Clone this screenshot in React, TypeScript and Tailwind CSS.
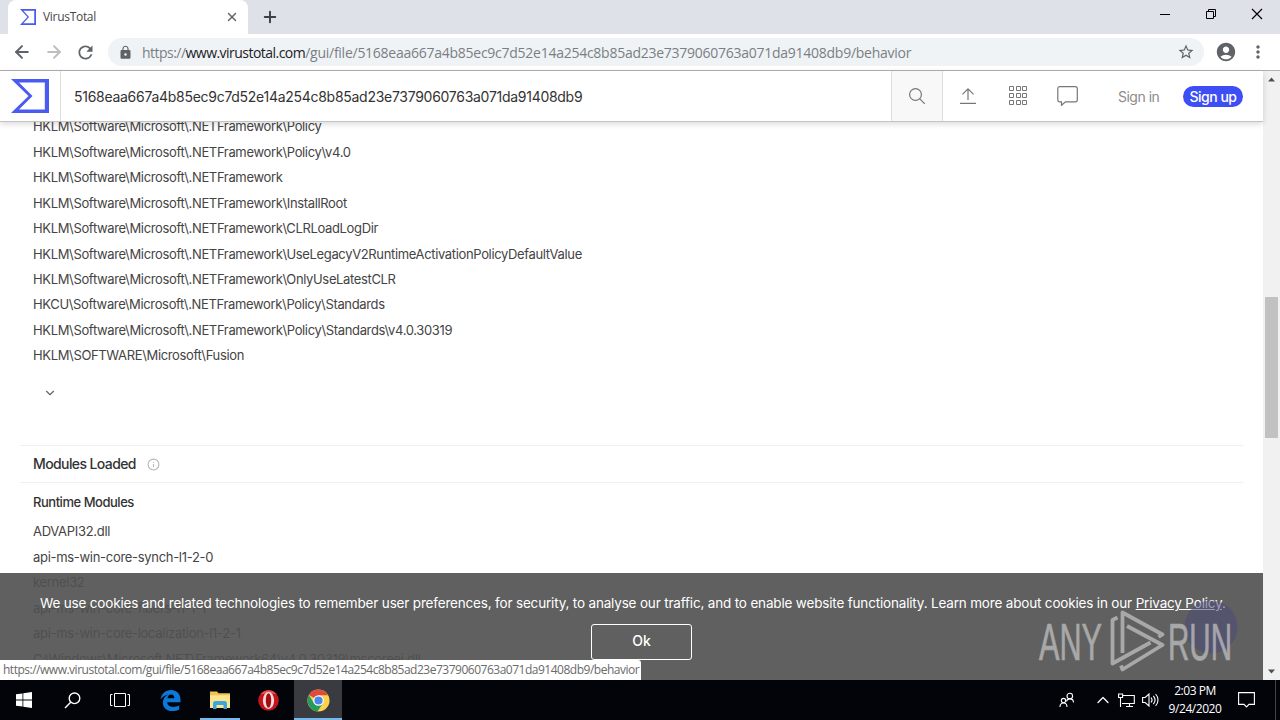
import React from 'react';
import { ArrowLeft, ArrowRight, ChevronDown, ChevronUp, Info, Plus, X } from 'lucide-react';
import { MdAccountCircle, MdLock, MdMoreVert, MdRefresh, MdStarBorder } from 'react-icons/md';

const HASH = '5168eaa667a4b85ec9c7d52e14a254c8b85ad23e7379060763a071da91408db9';

const registryKeys = [
  'HKLM\\Software\\Microsoft\\.NETFramework\\Policy',
  'HKLM\\Software\\Microsoft\\.NETFramework\\Policy\\v4.0',
  'HKLM\\Software\\Microsoft\\.NETFramework',
  'HKLM\\Software\\Microsoft\\.NETFramework\\InstallRoot',
  'HKLM\\Software\\Microsoft\\.NETFramework\\CLRLoadLogDir',
  'HKLM\\Software\\Microsoft\\.NETFramework\\UseLegacyV2RuntimeActivationPolicyDefaultValue',
  'HKLM\\Software\\Microsoft\\.NETFramework\\OnlyUseLatestCLR',
  'HKCU\\Software\\Microsoft\\.NETFramework\\Policy\\Standards',
  'HKLM\\Software\\Microsoft\\.NETFramework\\Policy\\Standards\\v4.0.30319',
  'HKLM\\SOFTWARE\\Microsoft\\Fusion',
];

const runtimeModules = [
  'ADVAPI32.dll',
  'api-ms-win-core-synch-l1-2-0',
  'kernel32',
  'api-ms-win-core-fibers-l1-1-1',
  'api-ms-win-core-localization-l1-2-1',
  'C:\\Windows\\Microsoft.NET\\Framework64\\v4.0.30319\\mscoreei.dll',
];

function SigmaLogo({ className }: { className: string }) {
  return (
    <svg viewBox="0 0 38 34" preserveAspectRatio="none" className={className}>
      <path fill="#4a5cf0" fillRule="evenodd" d="M0 0h38v34H0l17.5-17zM8 3.6 21.5 17 8 30.4H33.8V3.6z" />
    </svg>
  );
}

function TabStrip() {
  return (
    <div className="flex h-[34px] shrink-0 bg-[#dee1e8]">
      <div className="ml-2 flex w-[240px] items-center rounded-t-lg bg-white pl-3 pr-[9px]">
        <SigmaLogo className="h-4 w-4" />
        <span className="ml-[7px] grow text-[12px] tracking-[-0.3px] text-[#45474a]">VirusTotal</span>
        <X className="size-3.5 text-[#5f6368]" strokeWidth={2.4} />
      </div>
      <Plus className="ml-[13px] mt-[8px] size-[18px] text-[#3c4043]" strokeWidth={2.6} />
      <div className="ml-auto flex items-center pb-1.5 pr-[17px]">
        <svg className="h-3 w-3" viewBox="0 0 12 12" stroke="#000">
          <path d="M1 6.5h10" />
        </svg>
        <svg className="ml-[34px] h-3 w-3" viewBox="0 0 12 12" fill="none" stroke="#000">
          <path d="M1.5 3.5h7v7h-7zM3.5 3.5v-2h7v7h-2" />
        </svg>
        <svg className="ml-[34px] h-3 w-3" viewBox="0 0 12 12" stroke="#000" strokeWidth="1.2">
          <path d="M1 1l10 10M11 1L1 11" />
        </svg>
      </div>
    </div>
  );
}

function Toolbar() {
  return (
    <div className="flex h-[37px] shrink-0 items-center border-b border-[#b0b0b0] bg-white pl-3 text-[#5f6368]">
      <ArrowLeft className="size-5" strokeWidth={2.4} />
      <ArrowRight className="ml-3 size-5 text-[#bcbec0]" strokeWidth={2.4} />
      <MdRefresh className="ml-[11px] size-[21px]" />
      <div className="ml-[12px] flex h-7 w-[1096px] items-center rounded-full bg-[#f0f3f6] pl-[10px] pr-[9px]">
        <MdLock className="size-[15px]" />
        <span className="ml-[9px] grow whitespace-nowrap text-[14px] tracking-[-0.26px] text-[#7a7f84]">
          <span className="tracking-[-0.53px]">
            https://<span className="text-[#202124]">www.virustotal.com</span>
          </span>
          /gui/file/{HASH}/behavior
        </span>
        <MdStarBorder className="size-[18px]" />
      </div>
      <MdAccountCircle className="ml-[11px] size-[22px]" />
      <MdMoreVert className="ml-[11px] size-5" />
    </div>
  );
}

function Header() {
  return (
    <header className="relative z-10 flex h-[51px] shrink-0 items-center border-b border-[#c4c4c4] bg-white shadow-[0_2px_6px_rgba(0,0,0,0.15)]">
      <div className="flex h-full w-[61px] items-center border-r border-[#dedede] pl-[11px]">
        <SigmaLogo className="h-[34px] w-[38px]" />
      </div>
      <div className="grow whitespace-nowrap pl-[13px] font-[Inter] text-[14px] tracking-[-0.28px] text-[#333]">{HASH}</div>
      <div className="flex h-full w-[52px] items-center justify-center border-x border-[#dedede] bg-[#f8f8f8]">
        <svg className="size-[18px]" viewBox="0 0 18 18" fill="none" stroke="#777" strokeWidth="1.2">
          <circle cx="7.5" cy="7.5" r="5.9" />
          <path d="M11.8 11.8l5 5" />
        </svg>
      </div>
      <svg className="ml-[17px] h-[18px] w-4" viewBox="0 0 16 18" fill="none" stroke="#777" strokeWidth="1.2">
        <path d="M0 16.4h16M8 13V2M2.5 7.3L8 1.8l5.5 5.5" />
      </svg>
      <svg className="ml-[32px] h-5 w-[20px]" viewBox="0 0 20 20" fill="none" stroke="#777">
        <path d="M1.5 0.5h4v4h-4zM8.5 0.5h4v4h-4zM14.5 0.5h4v4h-4zM1.5 7.5h4v4h-4zM8.5 7.5h4v4h-4zM14.5 7.5h4v4h-4zM1.5 14.5h4v4h-4zM8.5 14.5h4v4h-4zM14.5 14.5h4v4h-4z" />
      </svg>
      <svg className="ml-[29px] h-5 w-[21px]" viewBox="0 0 21 20" fill="none" stroke="#777" strokeWidth="1.2">
        <path d="M2.5 0.7h16a1.8 1.8 0 0 1 1.8 1.8v11.5a1.8 1.8 0 0 1-1.8 1.8H8.5L4.5 19.3v-3.5h-2A1.8 1.8 0 0 1 0.8 14V2.5A1.8 1.8 0 0 1 2.5 0.7z" />
      </svg>
      <span className="ml-[40px] w-[65px] font-[Inter] text-[14px] tracking-[-0.5px] text-[#8c8c8c]">Sign in</span>
      <span className="mr-5 flex h-[21px] w-[60px] items-center justify-center rounded-full bg-[#3d4ef5] font-[Inter] text-[14px] font-medium tracking-[-0.5px] text-white">
        Sign up
      </span>
    </header>
  );
}

function Behavior() {
  return (
    <div className="min-h-0 grow overflow-hidden font-[Inter] text-[13px] text-[#444]">
      <ul className="-mt-[7.7px] pl-[33px] leading-[25.45px] tracking-[-0.35px]">
        {registryKeys.map((key) => (
          <li key={key} className="h-[25.45px] whitespace-nowrap">{key}</li>
        ))}
      </ul>
      <ChevronDown className="ml-[43px] mt-[17px] size-3.5 text-[#666]" />
      <div className="mx-5 mt-[45.7px] flex h-[38px] items-center border-y border-[#f0f0f0] pl-[13px]">
        <h2 className="pb-px text-[14px] font-medium tracking-[-0.6px] text-[#333]">Modules Loaded</h2>
        <Info className="ml-[11px] size-[13px] text-[#b5b5b5]" />
      </div>
      <div className="pl-[33px] tracking-[-0.3px]">
        <h3 className="mt-[7px] h-[25px] text-[13px] font-medium leading-[25px] tracking-[-0.47px] text-[#333]">Runtime Modules</h3>
        <ul className="mt-1 leading-[25.45px]">
          {runtimeModules.map((name) => (
            <li key={name} className="h-[25.45px] whitespace-nowrap">{name}</li>
          ))}
        </ul>
      </div>
    </div>
  );
}

function CookieBanner() {
  return (
    <div className="absolute bottom-0 left-0 z-20 h-[107px] w-full bg-[#505050]/91 pt-[20px] text-center font-[Inter] text-[14px] text-white">
      <p className="whitespace-nowrap pl-10 text-left text-[13.5px] leading-[21px] tracking-[-0.175px]">
        We use cookies and related technologies to remember user preferences, for security, to analyse our traffic, and to enable
        website functionality. Learn more about cookies in our <a className="underline">Privacy Policy</a>.
      </p>
      <button className="ml-[20px] mt-[10px] h-9 w-[101px] rounded-[3px] border border-white pb-[3px] font-medium">Ok</button>
    </div>
  );
}

function Watermark() {
  return (
    <svg className="absolute bottom-[6px] right-[29px] z-30 h-[66px] w-[196px] overflow-visible" viewBox="1038 608 196 66" fill="none">
      <circle cx="1211" cy="627" r="26.5" fill="#4a4a78" opacity="0.55" />
      <g
        fill="#c4c4c4"
        stroke="#c4c4c4"
        strokeWidth="0.7"
        opacity="0.72"
        fontFamily="Liberation Sans Narrow, Liberation Sans, sans-serif"
        fontSize="52"
      >
        <text x="1039" y="660" textLength="63" lengthAdjust="spacingAndGlyphs">ANY</text>
        <text x="1168" y="660" textLength="64" lengthAdjust="spacingAndGlyphs">RUN</text>
      </g>
      <g stroke="#c4c4c4" strokeWidth="3.8" strokeLinejoin="round" opacity="0.72">
        <path d="M1117.5 617.5l-5 2.5v43.5l38-21" />
        <path d="M1122.5 653V612.5l40 22-4 2.5M1127 626l35.5 19-40 24.5-1.5-4" />
      </g>
    </svg>
  );
}

function PageScrollbar() {
  return (
    <div className="flex w-[17px] shrink-0 flex-col items-center bg-[#f1f1f1]">
      <svg className="mt-[6px] h-[5px] w-[7px]" viewBox="0 0 7 5"><path d="M0 4.5L3.5 0.5 7 4.5z" fill="#505050" /></svg>
      <div className="mt-[215px] h-[141px] w-[13px] bg-[#c1c1c1]" />
      <svg className="mb-[6px] mt-auto h-[5px] w-[7px]" viewBox="0 0 7 5"><path d="M0 0.5h7L3.5 4.5z" fill="#505050" /></svg>
    </div>
  );
}

function Taskbar() {
  return (
    <div className="flex h-10 shrink-0 items-center bg-[#02040a] text-white">
      <div className="flex h-full w-12 items-center justify-center">
        <svg className="size-4" viewBox="0 0 16 16" fill="#fff">
          <path d="M0 2.3L6.5 1.4v6.1H0zM7.3 1.3L16 0v7.5H7.3zM0 8.4h6.5v6.2L0 13.7zM7.3 8.4H16V16l-8.7-1.3z" />
        </svg>
      </div>
      <div className="flex h-full w-12 items-center justify-center">
        <svg className="size-[17px]" viewBox="0 0 17 17" fill="none" stroke="#fff" strokeWidth="1.4">
          <circle cx="10.5" cy="6.3" r="5.3" />
          <path d="M6.7 10.2L1 16" />
        </svg>
      </div>
      <div className="flex h-full w-12 items-center justify-center">
        <svg className="h-3.5 w-5" viewBox="0 0 20 14" fill="none" stroke="#fff">
          <path d="M4.5 0.5h11v13h-11zM2.5 1.5h-2v11h2M17.5 1.5h2v11h-2" />
        </svg>
      </div>
      <div className="flex h-full w-[56px] items-center justify-center pr-[3px]">
        <svg className="size-[21px]" viewBox="0 0 21 21" fill="#0c78d8">
          <path d="M0.5 9.5C1.5 3.5 5.6 0 11 0c6 0 9.5 4.3 9.5 9.7v2.6H7.2c.2 3 2.6 4.6 6 4.6 2.4 0 4.4-.7 6-1.7v4.3c-1.9 1-4.3 1.5-7 1.5-5.6 0-9.3-3.3-9.3-8.3 0-3.6 2-6.6 5.3-8.2C4.8 5.3 2.3 6.8.5 9.5zM7.4 8.3h7c0-2.3-1.2-3.7-3.4-3.7-2 0-3.3 1.5-3.6 3.7z" />
        </svg>
      </div>
      <div className="flex h-full w-10 items-center justify-center border-b-2 border-[#76b9ed] pt-0.5">
        <svg className="h-[19px] w-[22px]" viewBox="0 0 22 19">
          <path d="M1 0.5h7l1.5 1.8H21V17H1z" fill="#f0c54e" />
          <path d="M1 4.3h20V17H1z" fill="#fde58d" />
          <path d="M4 18V12.5a2.5 2.5 0 0 1 2.5-2.5h9a2.5 2.5 0 0 1 2.5 2.5V18h-3.5v-4h-7v4z" fill="#3ba5de" />
        </svg>
      </div>
      <div className="flex h-full w-[54px] items-center justify-center pl-[3px]">
        <svg className="h-[21px] w-[21px]" viewBox="0 0 21 21">
          <circle cx="10.5" cy="10.5" r="10.3" fill="#c3161c" />
          <path d="M10.5 0.2a10.3 10.3 0 0 1 8 4c-5-1-11-1-16 0a10.3 10.3 0 0 1 8-4z" fill="#e8504a" />
          <ellipse cx="10.5" cy="10.5" rx="5.6" ry="8.4" fill="#f7dcdc" />
          <ellipse cx="10.5" cy="10.5" rx="2.7" ry="7.3" fill="#a30d12" />
        </svg>
      </div>
      <div className="flex h-full w-12 items-center justify-center border-b-2 border-[#76b9ed] bg-[#3a3b40] pt-0.5">
        <svg className="size-[23px]" viewBox="0 0 24 24">
          <circle cx="12" cy="12" r="11.5" fill="#fcd34a" />
          <path d="M12 12L2 6.3A11.5 11.5 0 0 1 22 6.5H12z" fill="#dd4b3e" />
          <path d="M2 6.3A11.5 11.5 0 0 0 11 23.45L16.7 14.7 12 12 7.2 14.7z" fill="#279b5c" />
          <circle cx="12" cy="12" r="5.5" fill="#fff" />
          <circle cx="12" cy="12" r="4.3" fill="#4a86ee" />
        </svg>
      </div>
      <svg className="ml-auto h-4 w-4" viewBox="0 0 16 16" fill="none" stroke="#fff" strokeWidth="1.1">
        <circle cx="10.8" cy="4" r="2.8" />
        <path d="M7.5 9.3c.5-1.6 1.7-2.4 3.3-2.4 2.2 0 3.7 1.4 3.7 3.7" />
        <circle cx="4.5" cy="8.6" r="2.2" />
        <path d="M1 15c0-2.4 1.4-4 3.5-4S8 12.6 8 15" />
      </svg>
      <ChevronUp className="ml-[18px] size-5" strokeWidth={1.5} />
      <svg className="ml-[5px] h-[15px] w-[17px]" viewBox="0 0 17 15" fill="none" stroke="#fff" strokeWidth="1.1">
        <path d="M4.5 2.5h11.8v8H4M8 13.5h7M11.5 10.5v3M0.6 1h4v3.5h-4zM2.5 4.5v9.5" />
      </svg>
      <svg className="ml-[7px] h-4 w-[17px]" viewBox="0 0 17 16" fill="none" stroke="#fff" strokeWidth="1.1">
        <path d="M0.6 5.5h2.6L7 2v12l-3.8-3.5H0.6zM9 5.5c1.3 1.5 1.3 3.5 0 5M11.3 3.8c2.2 2.6 2.2 5.8 0 8.4M13.6 2c3.2 3.5 3.2 8.5 0 12" />
      </svg>
      <div className="ml-[7px] w-[58px] whitespace-nowrap text-center text-[12px] leading-[18px] tracking-[-0.45px]">
        <div>2:03 PM</div>
        <div>9/24/2020</div>
      </div>
      <svg className="ml-[14px] h-4 w-[17px]" viewBox="0 0 17 16" fill="none" stroke="#fff" strokeWidth="1.1">
        <path d="M0.6 0.6h15.8v11.8H11L8.5 15 6 12.4H0.6z" />
      </svg>
      <div className="ml-[20px] mr-1 h-full border-l border-[#444]" />
    </div>
  );
}

export default function App() {
  return (
    <div className="flex h-[720px] w-[1280px] flex-col overflow-hidden bg-white font-['Open_Sans','Noto_Sans',sans-serif]">
      <TabStrip />
      <Toolbar />
      <div className="flex min-h-0 grow">
        <main className="relative flex w-[1263px] shrink-0 flex-col">
          <Header />
          <Behavior />
          <CookieBanner />
          <Watermark />
          <div className="absolute bottom-0 left-0 z-40 h-5 w-[641px] overflow-hidden whitespace-nowrap rounded-tr-[3px] bg-white pl-[3px] text-[12px] leading-5 tracking-[-0.49px] text-[#6a6a6a]">
            https://www.virustotal.com/gui/file/{HASH}/behavior
          </div>
        </main>
        <PageScrollbar />
      </div>
      <Taskbar />
    </div>
  );
}
